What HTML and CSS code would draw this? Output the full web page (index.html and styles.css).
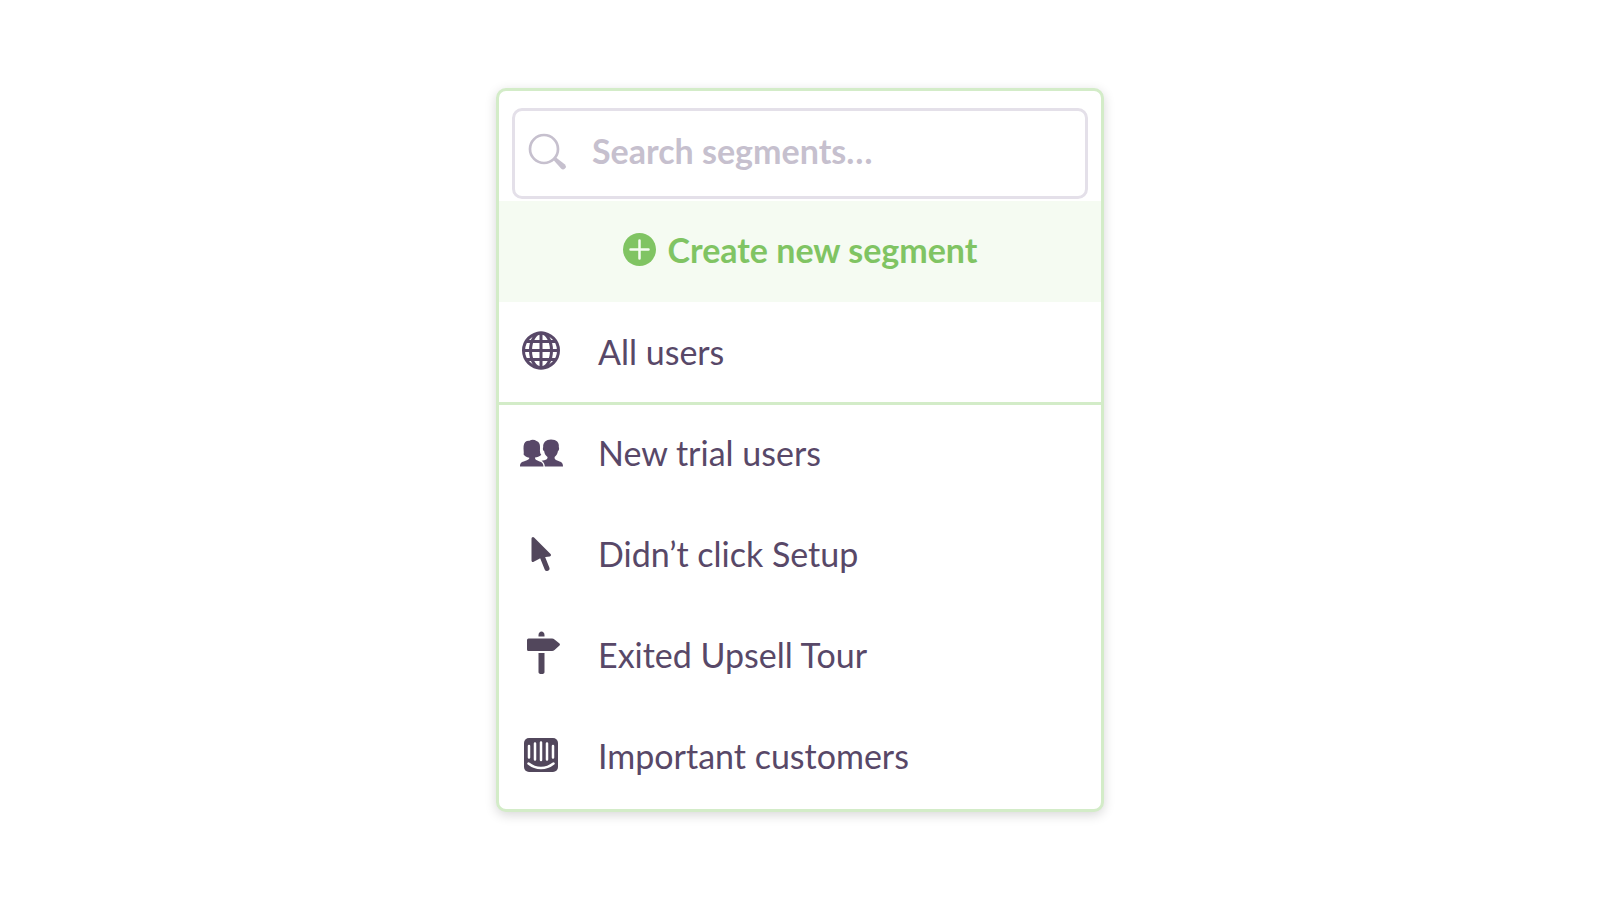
FILE: index.html
```html
<!DOCTYPE html>
<html lang="en">
<head>
    <meta charset="UTF-8">
    <meta name="viewport" content="width=device-width, initial-scale=1.0">
    <title>Segments</title>
    <link rel="stylesheet" href="styles.css">
</head>
<body>
<main class="panel">
    <label class="search">
        <svg class="search-icon" viewBox="0 0 40 40" aria-hidden="true">
            <circle cx="16" cy="16" r="14" fill="none" stroke="currentColor" stroke-width="2.700"/>
            <path d="M25.500 27L28 24.500L37 31.500Q38.800 33.500 37 35.500Q35 37.300 33 35.500Z" fill="currentColor"/>
        </svg>
        <input type="search" placeholder="Search segments…" aria-label="Search segments">
    </label>
    <button type="button" class="create">
        <svg class="create-icon" viewBox="0 0 33 33" aria-hidden="true">
            <circle cx="16.5" cy="16.5" r="16.5" fill="currentColor"/>
            <path d="M16.5 7.500V25.500M7.500 16.500H25.500" stroke="#f5fbf2" stroke-width="2.500" stroke-linecap="round"/>
        </svg>
        Create new segment
    </button>
    <a href="#" class="segment segment-all">
        <svg class="icon" viewBox="0 0 44 44" aria-hidden="true">
            <g fill="none" stroke="currentColor" stroke-width="3">
                <circle cx="22" cy="20.500" r="17.500"/>
                <ellipse cx="22" cy="20.500" rx="10.500" ry="17.500"/>
                <path d="M22 3V38M4 20.500H40M7.500 11.500H36.500M7.500 29.500H36.500"/>
            </g>
        </svg>
        All users
    </a>
    <nav class="segments">
        <a href="#" class="segment">
            <svg class="icon" viewBox="0 0 44 44" aria-hidden="true">
                <g fill="currentColor">
                    <path d="M1 35.500C1 32 2.500 31 6 30C9 29 10.500 28.500 10.300 26.800C7.500 26.300 5.500 25 4.600 23.500C5.200 21.500 4.200 18.500 4.600 15C5 11 7.500 9.300 10.500 9.700C12.500 8.400 15.500 8.500 17.500 10C20.500 11 21.300 14 21 17.500C20.800 20.500 21 22.500 22.300 23.800C20.500 25.800 18 26.300 16 26.500C16 28.500 17 29 19.500 30C22.500 31 24.300 32 24.500 35.500Z"/>
                    <path d="M25.800 35.500C25.600 32.800 24.500 31.200 22.500 29.800C26.500 29 28.800 28.600 28.500 26C26.500 24.500 25.500 22.500 25.200 20.200C23.800 19.500 23.600 17.500 24.200 16C23.800 11.500 27 8.500 32 8.500C37.500 8.500 40.500 11.500 39.800 16C40.500 17.500 40 19.500 38.900 20.200C38.500 22.500 37.500 24.500 35.600 26C35.300 28.500 36.500 29 39.500 30C42.500 31 44 32 44 35.500Z"/>
                </g>
            </svg>
            New trial users
        </a>
        <a href="#" class="segment">
            <svg class="icon icon-dark" viewBox="0 0 44 44" aria-hidden="true">
                <path d="M14 6.500L30.500 23L22.500 24L14 28.500Z" fill="currentColor" stroke="currentColor" stroke-width="3" stroke-linejoin="round"/>
                <path d="M23 24L28 36.500" stroke="currentColor" stroke-width="5" stroke-linecap="round"/>
            </svg>
            Didn’t click Setup
        </a>
        <a href="#" class="segment">
            <svg class="icon icon-dark" viewBox="0 0 44 44" aria-hidden="true">
                <g fill="currentColor">
                    <path d="M19.500 3.500V2C19.500 0 21 -1.500 22.500 -1.500S25.500 0 25.500 2V3.500Z"/>
                    <path d="M9.500 5.500H33Q34.500 5.500 35.500 6.500L40.500 10.500Q41.500 11.500 40.500 12.500L35.500 17Q34.500 18 33 18H9.500Q8 18 8 16.500V7Q8 5.500 9.500 5.500Z"/>
                    <path d="M19.500 20H25.500V39Q25.500 41 22.500 41T19.500 39Z"/>
                </g>
            </svg>
            Exited Upsell Tour
        </a>
        <a href="#" class="segment">
            <svg class="icon icon-dark" viewBox="0 0 44 44" aria-hidden="true">
                <rect x="5" y="4" width="34" height="34" rx="5" fill="currentColor"/>
                <g fill="none" stroke="#fff" stroke-width="2.500" stroke-linecap="round">
                    <path d="M10 12V23.500M16 9.500V25.500M22 8.500V26M28 9.500V25.500M34 12V23.500"/>
                    <path d="M9.500 29.500C17 35.500 27 35.500 34.500 29.500"/>
                </g>
            </svg>
            Important customers
        </a>
    </nav>
</main>
</body>
</html>
```
FILE: styles.css
```css
* {
    box-sizing: border-box;
}

body {
    display: flex;
    align-items: center;
    justify-content: center;
    min-height: 100vh;
    margin: 0;
    background-color: #fff;
    font-family: Lato, "Open Sans", sans-serif;
    font-size: 34px;
    line-height: 40px;
    color: #584868;
}

.panel {
    width: 38%;
    min-width: 480px;
    background-color: #fff;
    border: 3px solid #d3ecc8;
    border-radius: 10px;
    box-shadow: 0 3px 12px rgba(0, 0, 0, 0.16);
    overflow: hidden;
}

.search {
    display: flex;
    align-items: center;
    gap: 24px;
    margin: 17px 13px 2px;
    padding: 22px 13px 23px;
    border: 3px solid #e4e0e9;
    border-radius: 10px;
    color: #c6c0ce;
}

.search-icon {
    flex: none;
    width: 40px;
    height: 40px;
}

.search input {
    flex: 1;
    min-width: 0;
    height: 40px;
    padding: 0 0 4px;
    border: none;
    outline: none;
    background: none;
    font: inherit;
    font-weight: 700;
    color: #584868;
}

.search input::placeholder {
    color: #c6c0ce;
    opacity: 1;
}

.create {
    display: flex;
    align-items: center;
    justify-content: center;
    gap: 12px;
    width: 100%;
    height: 101px;
    padding: 0 0 4px;
    border: none;
    background-color: #f5fbf2;
    font: inherit;
    font-weight: 700;
    color: #80c463;
    cursor: pointer;
}

.create-icon {
    width: 33px;
    height: 33px;
}

.segment {
    display: flex;
    align-items: center;
    gap: 35px;
    height: 101px;
    padding: 0 20px 5px;
    color: inherit;
    text-decoration: none;
}

.segment-all {
    height: 103px;
    padding-bottom: 1px;
    border-bottom: 3px solid #d3ecc8;
}

.icon {
    flex: none;
    width: 44px;
    height: 44px;
    overflow: visible;
}

.icon-dark {
    color: #52475c;
}
```
